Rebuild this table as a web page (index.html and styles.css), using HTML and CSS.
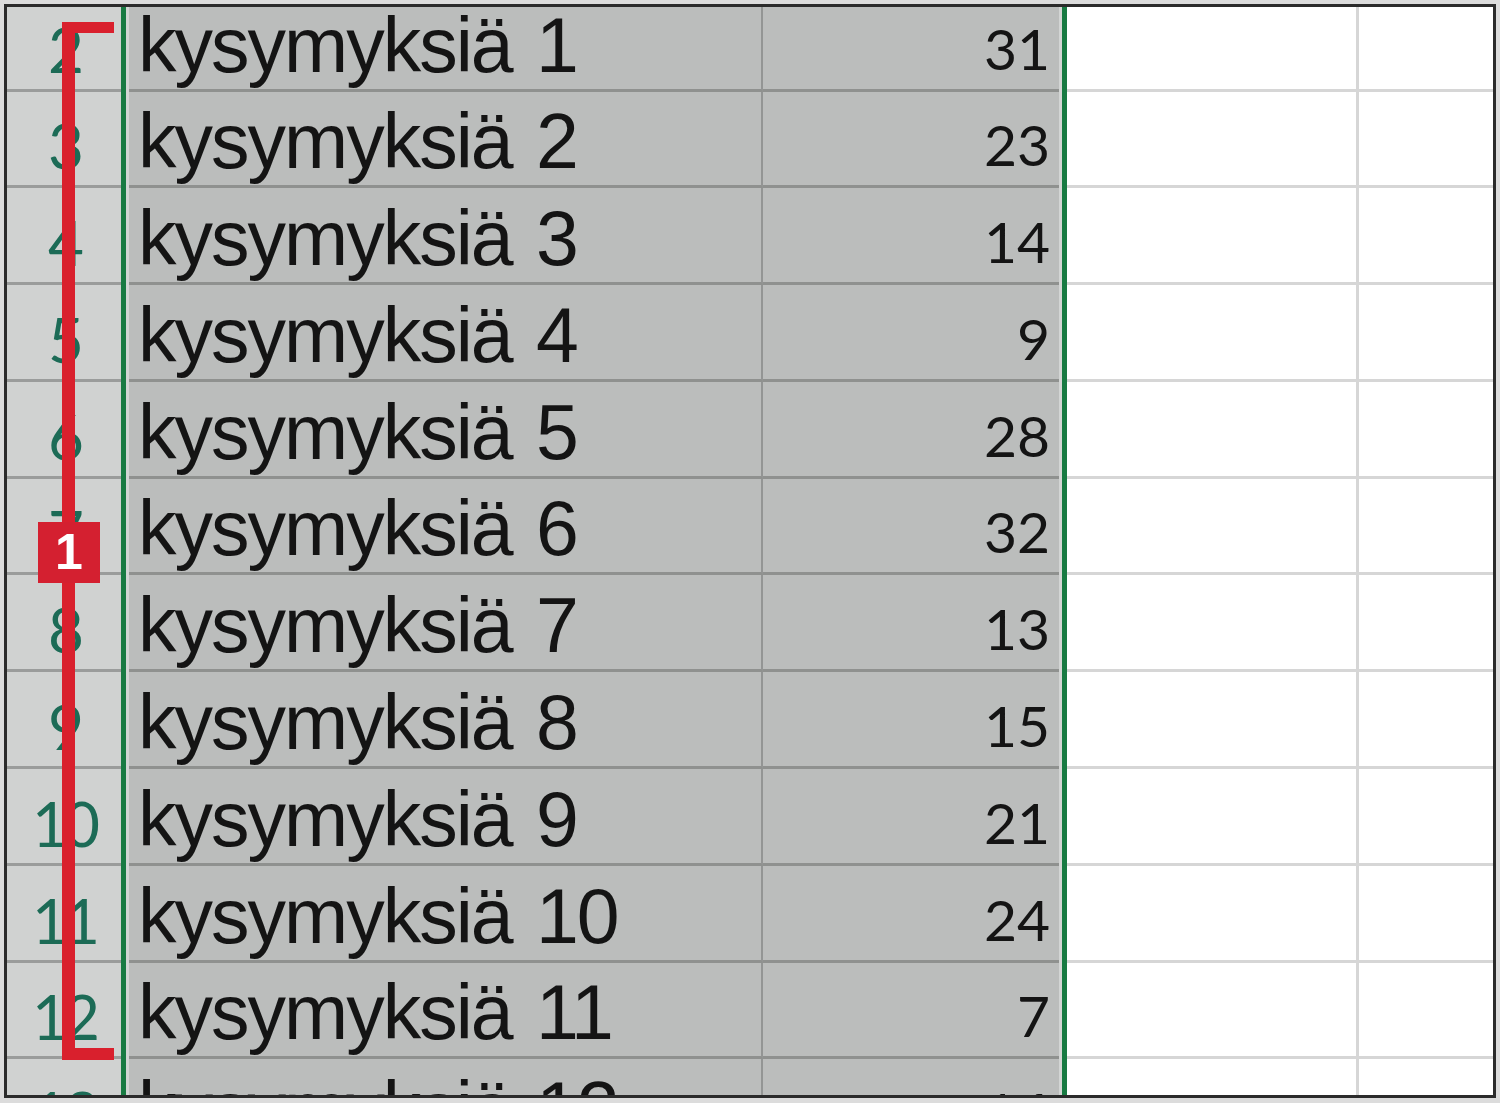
FILE: index.html
```html
<!DOCTYPE html>
<html lang="fi">
<head>
<meta charset="utf-8">
<title>Kysymyksiä</title>
<link rel="stylesheet" href="styles.css">
</head>
<body>
<div class="frame">
  <div class="grid">
    <div class="rh">2</div><div class="b">kysymyksiä 1</div><div class="c">31</div><div class="d"></div><div class="e"></div>
    <div class="rh">3</div><div class="b">kysymyksiä 2</div><div class="c">23</div><div class="d"></div><div class="e"></div>
    <div class="rh">4</div><div class="b">kysymyksiä 3</div><div class="c">14</div><div class="d"></div><div class="e"></div>
    <div class="rh">5</div><div class="b">kysymyksiä 4</div><div class="c">9</div><div class="d"></div><div class="e"></div>
    <div class="rh">6</div><div class="b">kysymyksiä 5</div><div class="c">28</div><div class="d"></div><div class="e"></div>
    <div class="rh">7</div><div class="b">kysymyksiä 6</div><div class="c">32</div><div class="d"></div><div class="e"></div>
    <div class="rh">8</div><div class="b">kysymyksiä 7</div><div class="c">13</div><div class="d"></div><div class="e"></div>
    <div class="rh">9</div><div class="b">kysymyksiä 8</div><div class="c">15</div><div class="d"></div><div class="e"></div>
    <div class="rh">10</div><div class="b">kysymyksiä 9</div><div class="c">21</div><div class="d"></div><div class="e"></div>
    <div class="rh">11</div><div class="b">kysymyksiä 10</div><div class="c">24</div><div class="d"></div><div class="e"></div>
    <div class="rh">12</div><div class="b">kysymyksiä 11</div><div class="c">7</div><div class="d"></div><div class="e"></div>
    <div class="rh">13</div><div class="b">kysymyksiä 12</div><div class="c">16</div><div class="d"></div><div class="e"></div>
  </div>
  <div class="selection"></div>
  <div class="bracket"></div>
  <div class="badge">1</div>
</div>
</body>
</html>
```

FILE: styles.css
```css
html, body {
  margin: 0;
  padding: 0;
}
body {
  background: #dcdcdc;
  width: 1500px;
  height: 1103px;
  overflow: hidden;
}
.frame {
  position: relative;
  margin: 4px;
  width: 1492px;
  height: 1094px;
  box-sizing: border-box;
  border: 3px solid #2b2b2b;
  overflow: hidden;
  background: #ffffff;
}
.grid {
  display: grid;
  grid-template-columns: 114px 642px 301px 295px 1fr;
  grid-auto-rows: 96.8px;
  margin-top: -12.3px;
}
.grid > div {
  box-sizing: border-box;
  display: flex;
  align-items: flex-end;
  white-space: nowrap;
}
.rh {
  background: #d0d2d1;
  border-bottom: 3px solid #9a9c9b;
  justify-content: center;
  font-family: Lato, "Open Sans", sans-serif;
  font-size: 62px;
  line-height: 62px;
  letter-spacing: -4px;
  color: #1c6b56;
  padding-bottom: 9px;
}
.b {
  background: #bbbdbc;
  border-bottom: 3px solid #8f918f;
  border-right: 2px solid #939594;
  font-family: "Liberation Sans", Arial, sans-serif;
  font-size: 77px;
  line-height: 77px;
  letter-spacing: -2px;
  word-spacing: 5px;
  color: #141414;
  padding-left: 17px;
  padding-bottom: 5px;
}
.c {
  background: #bbbdbc;
  border-bottom: 3px solid #8f918f;
  justify-content: flex-end;
  font-family: Lato, "Open Sans", sans-serif;
  font-size: 57px;
  line-height: 57px;
  color: #141414;
  padding-right: 14px;
  padding-bottom: 12px;
}
.d {
  border-bottom: 3px solid #d6d6d6;
  border-right: 3px solid #d6d6d6;
}
.e {
  border-bottom: 3px solid #d6d6d6;
}
.selection {
  position: absolute;
  left: 114px;
  top: -10px;
  bottom: -10px;
  width: 946px;
  box-sizing: border-box;
  border-left: 5px solid #187a42;
  border-right: 5px solid #187a42;
  box-shadow: inset 3px 0 0 #d3d5d4, inset -3px 0 0 #d3d5d4;
}
.bracket {
  position: absolute;
  left: 55px;
  top: 15px;
  width: 52px;
  height: 1038px;
  box-sizing: border-box;
  border-left: 13px solid #d9202d;
  border-top: 11px solid #d9202d;
  border-bottom: 12px solid #d9202d;
}
.badge {
  position: absolute;
  left: 31px;
  top: 515px;
  width: 62px;
  height: 61px;
  background: #d42030;
  color: #ffffff;
  font-family: "Liberation Sans", Arial, sans-serif;
  font-weight: bold;
  font-size: 50px;
  line-height: 61px;
  text-align: center;
}
```
